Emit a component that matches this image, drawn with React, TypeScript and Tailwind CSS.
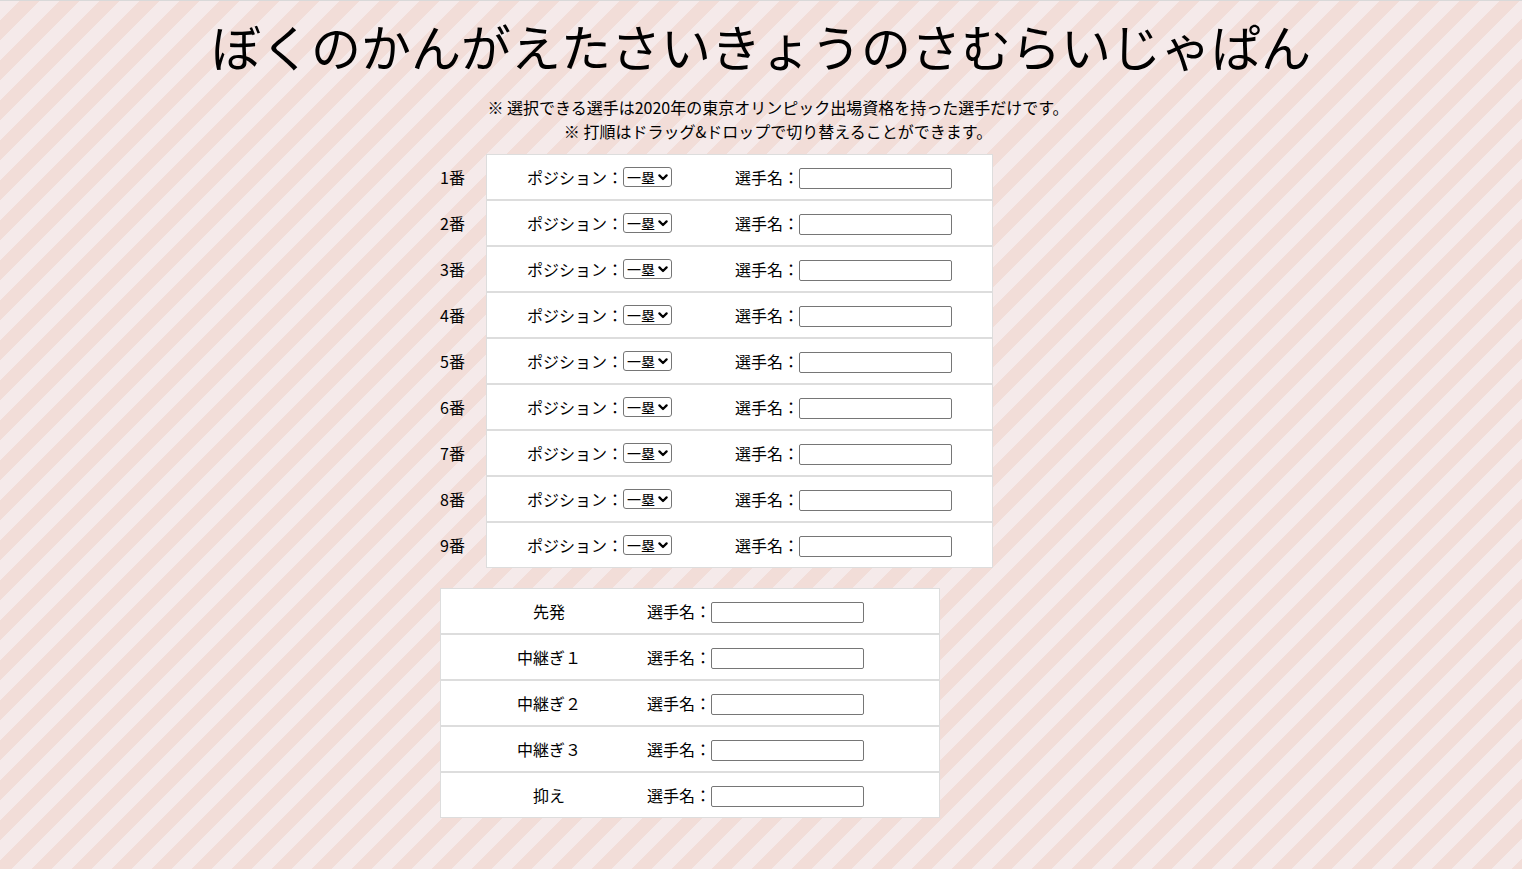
import React from "react";

const FONT = "font-['Noto_Sans_CJK_JP','Noto_Sans',sans-serif]";

function PosSelect() {
  return (
    <span className="relative inline-flex items-center">
      <select
        defaultValue="一塁"
        className="appearance-none w-[49px] h-[20px] border border-[#767676] rounded-[3px] bg-white text-[14px] leading-none pl-[3px] text-black"
      >
        <option>一塁</option>
        <option>二塁</option>
        <option>三塁</option>
        <option>遊撃</option>
        <option>左翼</option>
        <option>中堅</option>
        <option>右翼</option>
        <option>捕手</option>
        <option>指名打者</option>
      </select>
      <svg
        className="absolute right-[4px] top-[7px] pointer-events-none"
        width="10"
        height="7"
        viewBox="0 0 10 7"
      >
        <path d="M1.4 1.4 L5 5 L8.6 1.4" fill="none" stroke="#000" strokeWidth="2.2" strokeLinecap="round" strokeLinejoin="round" />
      </svg>
    </span>
  );
}

function NameInput() {
  return (
    <input
      type="text"
      className="w-[153px] h-[21px] border border-[#767676] rounded-[2px] bg-white mt-[2px]"
    />
  );
}

export default function App() {
  const order = [1, 2, 3, 4, 5, 6, 7, 8, 9];
  const pitchers = ["先発", "中継ぎ１", "中継ぎ２", "中継ぎ３", "抑え"];
  return (
    <div
      className={`${FONT} min-h-screen border-t border-[#d9d9d9] text-black bg-[repeating-linear-gradient(135deg,#f5eaea_0px,#f5eaea_14.14px,#f2ddd8_14.14px,#f2ddd8_28.28px)]`}
    >
      <h1 className="text-center text-[50px] leading-[60px] font-normal pt-[14px]">
        ぼくのかんがえたさいきょうのさむらいじゃぱん
      </h1>
      <div className="mt-[20px] pl-[34px] text-center text-[16px] leading-[24px]">
        <p>※ 選択できる選手は2020年の東京オリンピック出場資格を持った選手だけです。</p>
        <p>※ 打順はドラッグ&amp;ドロップで切り替えることができます。</p>
      </div>
      <div className="w-[642px] mx-auto mt-[11px] text-[16px]">
        <div className="flex flex-col">
          {order.map((n) => (
            <div key={n} className="flex">
              <div className="w-[46px] flex items-center">{n}番</div>
              <div className="w-[507px] h-[46px] border border-[#dddddd] bg-white flex items-center justify-between px-10">
                <div className="flex items-center">
                  <span>ポジション：</span>
                  <PosSelect />
                </div>
                <div className="flex items-center">
                  <span>選手名：</span>
                  <NameInput />
                </div>
              </div>
            </div>
          ))}
        </div>
        <div className="flex flex-col mt-[20px]">
          {pitchers.map((p) => (
            <div
              key={p}
              className="w-[500px] h-[46px] border border-[#dddddd] bg-white flex items-center pl-[18px]"
            >
              <div className="w-[180px] text-center">{p}</div>
              <div className="ml-2 flex items-center">
                <span>選手名：</span>
                <NameInput />
              </div>
            </div>
          ))}
        </div>
      </div>
    </div>
  );
}
